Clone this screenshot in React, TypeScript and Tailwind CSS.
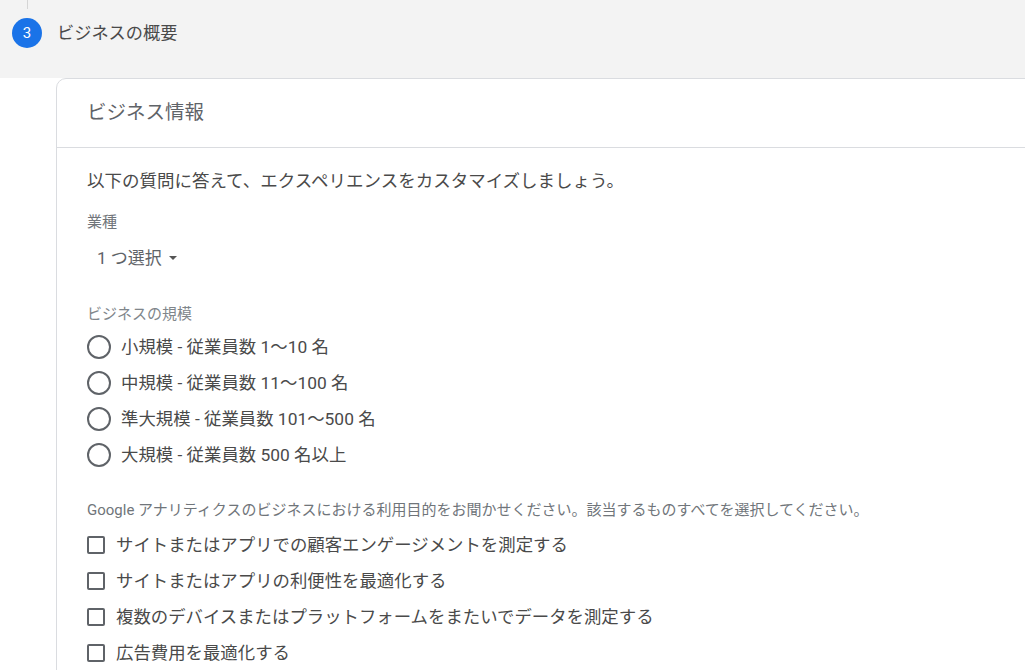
const font = { fontFamily: '"Roboto", "Noto Sans CJK JP", sans-serif' };

const radios = [
  "小規模 - 従業員数 1～10 名",
  "中規模 - 従業員数 11～100 名",
  "準大規模 - 従業員数 101～500 名",
  "大規模 - 従業員数 500 名以上",
];
const checks = [
  "サイトまたはアプリでの顧客エンゲージメントを測定する",
  "サイトまたはアプリの利便性を最適化する",
  "複数のデバイスまたはプラットフォームをまたいでデータを測定する",
  "広告費用を最適化する",
];

export default function App() {
  return (
    <div style={font} className="w-[1025px] h-[670px] overflow-hidden bg-white text-[#3c4043]">
      <div className="h-[78px] bg-[#f3f3f3] relative">
        <div className="absolute left-[27px] top-0 w-px h-[9px] bg-[#d5d5d5]" />
        <div className="flex items-center pl-[12px] pt-[18px] gap-[15px]">
          <div className="w-[30px] h-[30px] rounded-full bg-[#1a73e8] text-white text-[15px] flex items-center justify-center">3</div>
          <div className="text-[17.2px] leading-[30px] text-[#4a4a4a]">ビジネスの概要</div>
        </div>
      </div>
      <div className="ml-[56px] w-[1000px] h-[700px] bg-white border border-[#dadce0] rounded-tl-[10px]">
        <div className="h-[69px] border-b border-[#dadce0] pl-[30px] flex items-center text-[19.5px] text-[#5f6368]">ビジネス情報</div>
        <div className="pl-[30px]">
          <div className="pt-[21px] text-[17.5px] leading-[24px] text-[#4a4a4a]">以下の質問に答えて、エクスペリエンスをカスタマイズしましょう。</div>
          <div className="mt-[19px] text-[15px] leading-[20px] text-[#70757a]">業種</div>
          <div className="mt-[14px] pl-[10px] flex items-center gap-[7px] text-[17px] leading-[24px] text-[#5f6368]">
            <span>1 つ選択</span>
            <span className="w-0 h-0 border-x-[4.5px] border-x-transparent border-t-[4.5px] border-t-[#555]" />
          </div>
          <div className="mt-[34px] text-[15px] leading-[20px] text-[#80868b]">ビジネスの規模</div>
          <div className="mt-[5px] flex flex-col">
            {radios.map((r) => (
              <div key={r} className="h-[36px] flex items-center gap-[10px] text-[17.4px] text-[#4a4a4a]">
                <span className="w-[24px] h-[24px] rounded-full border-2 border-[#5f6368] shrink-0" />
                <span>{r}</span>
              </div>
            ))}
          </div>
          <div className="mt-[27px] text-[15px] leading-[20px] text-[#70757a]">Google アナリティクスのビジネスにおける利用目的をお聞かせください。該当するものすべてを選択してください。</div>
          <div className="mt-[7px] flex flex-col">
            {checks.map((c) => (
              <div key={c} className="h-[36px] flex items-center gap-[11px] text-[17.4px] text-[#4a4a4a]">
                <span className="w-[18px] h-[18px] rounded-[2px] border-2 border-[#5f6368] shrink-0" />
                <span>{c}</span>
              </div>
            ))}
          </div>
        </div>
      </div>
    </div>
  );
}
